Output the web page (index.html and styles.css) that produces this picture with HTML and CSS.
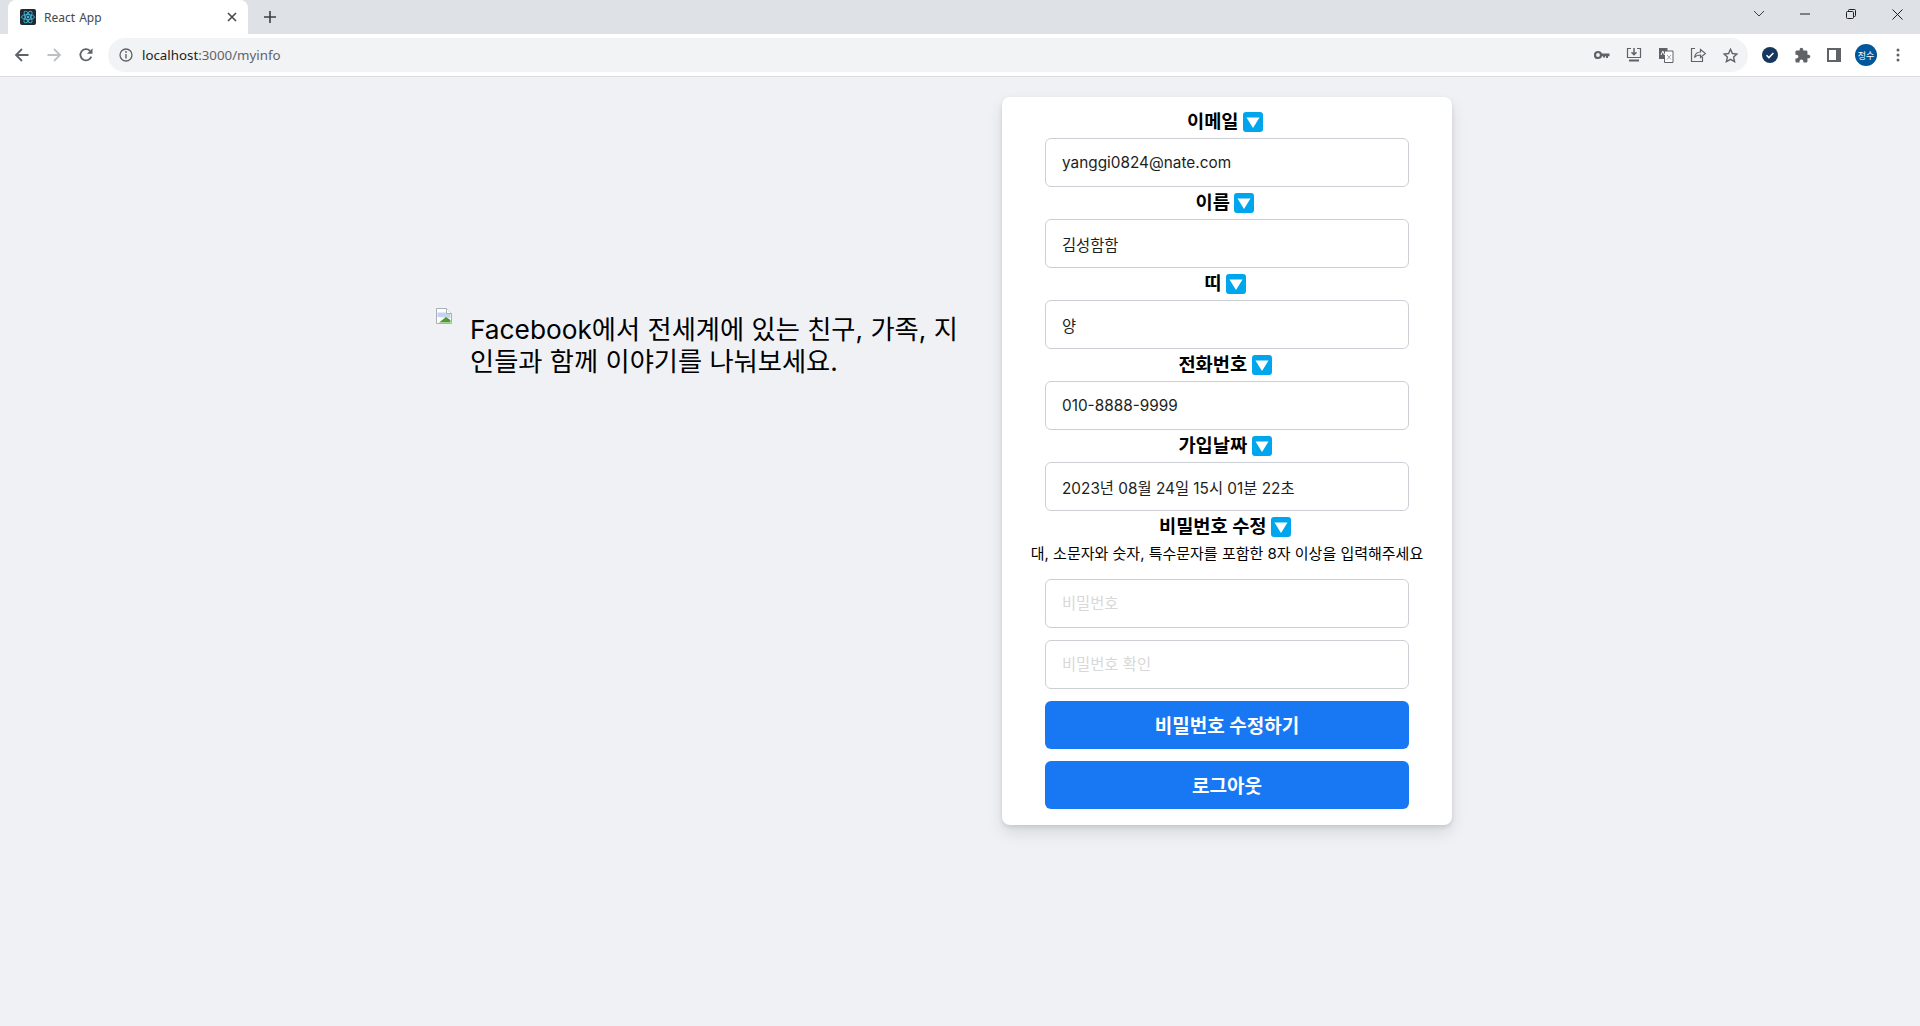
FILE: index.html
```html
<!DOCTYPE html>
<html lang="ko">
<head>
<meta charset="utf-8">
<title>React App</title>
<link rel="stylesheet" href="styles.css">
</head>
<body>
<header class="chrome">
  <div class="tabbar">
    <div class="tab">
      <svg class="favicon" width="16" height="16" viewBox="0 0 16 16"><rect width="16" height="16" rx="2" fill="#1f2a30"/><g fill="none" stroke="#3fb6d8" stroke-width="0.9"><ellipse cx="8" cy="8" rx="6.5" ry="2.5"/><ellipse cx="8" cy="8" rx="6.5" ry="2.5" transform="rotate(60 8 8)"/><ellipse cx="8" cy="8" rx="6.5" ry="2.5" transform="rotate(120 8 8)"/></g><circle cx="8" cy="8" r="1.3" fill="#3fb6d8"/></svg>
      <span class="tab-title">React App</span>
      <svg class="tab-close" width="10" height="10" viewBox="0 0 10 10"><path d="M1 1l8 8M9 1l-8 8" stroke="#45484c" stroke-width="1.6"/></svg>
    </div>
    <svg class="new-tab" width="12" height="12" viewBox="0 0 12 12"><path d="M6 0v12M0 6h12" stroke="#3c4043" stroke-width="1.6"/></svg>
    <div class="win-controls">
      <span class="win-btn"><svg width="12" height="8" viewBox="0 0 12 8"><path d="M1 1l5 5 5-5" fill="none" stroke="#3c4043" stroke-width="1"/></svg></span>
      <span class="win-btn"><svg width="10" height="2" viewBox="0 0 10 2"><path d="M0 1h10" stroke="#1f1f1f" stroke-width="1"/></svg></span>
      <span class="win-btn"><svg width="10" height="10" viewBox="0 0 10 10"><path d="M2.5 2.5V1.5a1 1 0 0 1 1-1h5a1 1 0 0 1 1 1v5a1 1 0 0 1-1 1h-1" fill="none" stroke="#1f1f1f"/><rect x="0.5" y="2.5" width="7" height="7" rx="1" fill="none" stroke="#1f1f1f"/></svg></span>
      <span class="win-btn"><svg width="11" height="11" viewBox="0 0 11 11"><path d="M.5.5l10 10M10.5.5l-10 10" stroke="#1f1f1f" stroke-width="1"/></svg></span>
    </div>
  </div>
  <div class="toolbar">
    <span class="tool"><svg width="16" height="16" viewBox="0 0 16 16"><path d="M14.5 8H2.5M8 2L2 8l6 6" fill="none" stroke="#5f6368" stroke-width="1.8"/></svg></span>
    <span class="tool"><svg width="16" height="16" viewBox="0 0 16 16"><path d="M1.5 8h12M8 2l6 6-6 6" fill="none" stroke="#bdc1c6" stroke-width="1.8"/></svg></span>
    <span class="tool"><svg width="16" height="16" viewBox="0 0 16 16"><path d="M13.3 9.6A5.6 5.6 0 1 1 12 3.9" fill="none" stroke="#5f6368" stroke-width="1.8"/><path d="M14.5 1.2v5.6H8.9z" fill="#5f6368"/></svg></span>
    <div class="omnibox">
      <svg class="info" width="14" height="14" viewBox="0 0 14 14"><circle cx="7" cy="7" r="6" fill="none" stroke="#5f6368" stroke-width="1.3"/><path d="M7 6v4.4" stroke="#5f6368" stroke-width="1.4"/><circle cx="7" cy="4" r="0.9" fill="#5f6368"/></svg>
      <span class="url"><span class="url-host">localhost</span>:3000/myinfo</span>
      <span class="omni-icons">
        <span class="tool"><svg width="16" height="16" viewBox="0 0 16 16"><circle cx="4" cy="8" r="3" fill="none" stroke="#5f6368" stroke-width="2.2"/><path d="M6.500 6.500H15.500V9.200H14V11h-2V9.200h-1V10.500H9V9.200H6.500z" fill="#5f6368"/></svg></span>
        <span class="tool"><svg width="16" height="16" viewBox="0 0 16 16"><path d="M5 1.500H1.500v9h13v-9H11" fill="none" stroke="#5f6368" stroke-width="1.2"/><path d="M8 1v6.500M5.500 5.300L8 7.800l2.500-2.500" fill="none" stroke="#5f6368" stroke-width="1.5"/><path d="M3 12.500h10v2H3z" fill="#5f6368"/></svg></span>
        <span class="tool"><svg width="16" height="16" viewBox="0 0 16 16"><rect x="1" y="1" width="8.500" height="11" fill="#5f6368"/><path d="M6.500 4H15v11.500H6.500z" fill="#fff" stroke="#5f6368"/><path d="M9 8l4 4.500M13 8l-4 4.500" stroke="#9aa0a6"/><path d="M3 8l1.800-4L6.500 8" fill="none" stroke="#fff"/></svg></span>
        <span class="tool"><svg width="16" height="16" viewBox="0 0 16 16"><path d="M5 1.500H1.500v13h11V10" fill="none" stroke="#5f6368" stroke-width="1.200"/><path d="M4.500 10.500C5 7 7.500 5 10.500 5V2.500l5 4-5 4V8C8 8 6 8.500 4.500 10.500z" fill="none" stroke="#5f6368" stroke-width="1.200"/></svg></span>
        <span class="tool"><svg width="15" height="15" viewBox="0 0 15 15"><path d="M7.500 1.300l1.900 4.200 4.600.5-3.400 3.100 1 4.500-4.100-2.300-4.100 2.300 1-4.500L1 6l4.600-.5z" fill="none" stroke="#5f6368" stroke-width="1.400"/></svg></span>
      </span>
    </div>
    <span class="tool tool-first"><svg width="16" height="16" viewBox="0 0 16 16"><circle cx="8" cy="8" r="8" fill="#17375e"/><path d="M4.500 8.300l2.400 2.300 4.500-4.700" fill="none" stroke="#fff" stroke-width="1.500"/></svg></span>
    <span class="tool"><svg width="17" height="17" viewBox="0 0 24 24"><path d="M20.500 11H19V7c0-1.100-.9-2-2-2h-4V3.500C13 2.120 11.880 1 10.500 1S8 2.120 8 3.500V5H4c-1.100 0-1.990.9-1.990 2v3.800H3.500c1.490 0 2.700 1.210 2.700 2.700s-1.210 2.700-2.700 2.700H2V20c0 1.100.9 2 2 2h3.800v-1.500c0-1.490 1.210-2.700 2.700-2.700 1.490 0 2.700 1.210 2.700 2.700V22H17c1.100 0 2-.9 2-2v-4h1.500c1.380 0 2.500-1.120 2.500-2.500S21.880 11 20.500 11z" fill="#5f6368"/></svg></span>
    <span class="tool"><svg width="14" height="14" viewBox="0 0 14 14"><rect x="1" y="1" width="12" height="12" fill="#fff" stroke="#5f6368" stroke-width="2"/><rect x="9" y="1" width="4" height="12" fill="#5f6368"/></svg></span>
    <span class="tool"><span class="avatar">정수</span></span>
    <span class="tool"><svg width="4" height="14" viewBox="0 0 4 14"><circle cx="2" cy="2" r="1.500" fill="#5f6368"/><circle cx="2" cy="7" r="1.500" fill="#5f6368"/><circle cx="2" cy="12" r="1.500" fill="#5f6368"/></svg></span>
  </div>
</header>

<main class="page">
  <section class="intro">
    <svg class="broken" width="16" height="16" viewBox="0 0 16 16"><path d="M.5.500h10l5 5v10H.500z" fill="#fff" stroke="#a9b0b8"/><path d="M1.500 4.500h8.500l4.500 1.500v4L1.500 9z" fill="#c5d3ee"/><path d="M3 14.500L10 9l4.500 3v2.500z" fill="#4f9a35"/><path d="M10.500.500v5h5" fill="#fff" stroke="#a9b0b8"/></svg>
    <h2 class="tagline">Facebook에서 전세계에 있는 친구, 가족, 지인들과 함께 이야기를 나눠보세요.</h2>
  </section>

  <form class="card">
    <label class="field-label">이메일 <svg class="down" viewBox="0 0 20 20"><rect width="20" height="20" rx="3" fill="#00a6ed"/><path d="M3.500 5.500h13L10 16z" fill="#fff"/></svg></label>
    <input class="field" value="yanggi0824@nate.com">
    <label class="field-label">이름 <svg class="down" viewBox="0 0 20 20"><rect width="20" height="20" rx="3" fill="#00a6ed"/><path d="M3.500 5.500h13L10 16z" fill="#fff"/></svg></label>
    <input class="field" value="김성함함">
    <label class="field-label">띠 <svg class="down" viewBox="0 0 20 20"><rect width="20" height="20" rx="3" fill="#00a6ed"/><path d="M3.500 5.500h13L10 16z" fill="#fff"/></svg></label>
    <input class="field" value="양">
    <label class="field-label">전화번호 <svg class="down" viewBox="0 0 20 20"><rect width="20" height="20" rx="3" fill="#00a6ed"/><path d="M3.500 5.500h13L10 16z" fill="#fff"/></svg></label>
    <input class="field" value="010-8888-9999">
    <label class="field-label">가입날짜 <svg class="down" viewBox="0 0 20 20"><rect width="20" height="20" rx="3" fill="#00a6ed"/><path d="M3.500 5.500h13L10 16z" fill="#fff"/></svg></label>
    <input class="field" value="2023년 08월 24일 15시 01분 22초">
    <label class="field-label">비밀번호 수정 <svg class="down" viewBox="0 0 20 20"><rect width="20" height="20" rx="3" fill="#00a6ed"/><path d="M3.500 5.500h13L10 16z" fill="#fff"/></svg></label>
    <p class="hint">대, 소문자와 숫자, 특수문자를 포함한 8자 이상을 입력해주세요</p>
    <input class="field field-stack" placeholder="비밀번호">
    <input class="field field-stack" placeholder="비밀번호 확인">
    <button class="btn" type="button">비밀번호 수정하기</button>
    <button class="btn" type="button">로그아웃</button>
  </form>
</main>
</body>
</html>
```
FILE: styles.css
```css
* { box-sizing: border-box; }
html, body { margin: 0; height: 100%; }
body {
  background: #eff1f5;
  font-family: Inter, "Noto Sans CJK KR", "Noto Sans", sans-serif;
  color: #000;
  overflow: hidden;
}

/* browser chrome */
.chrome { height: 77px; font-family: "Noto Sans", "Noto Sans CJK KR", sans-serif; }
.tabbar { height: 34px; background: #dee1e6; display: flex; align-items: center; padding-left: 8px; }
.tab {
  width: 240px; height: 34px; background: #fff; border-radius: 8px 8px 0 0;
  display: flex; align-items: center; padding: 0 11px 0 12px;
}
.favicon { flex: none; }
.tab-title { margin-left: 8px; font-size: 12px; color: #45484c; flex: 1; word-spacing: 1px; }
.tab-close { flex: none; }
.new-tab { margin-left: 16px; }
.win-controls { margin-left: auto; display: flex; height: 28px; align-self: flex-start; }
.win-btn { width: 46px; height: 28px; display: flex; align-items: center; justify-content: center; }
.toolbar {
  height: 43px; background: #fff; border-bottom: 1px solid #dadce0;
  display: flex; align-items: center; padding-left: 6px; padding-right: 6px;
}
.tool { width: 32px; height: 32px; flex: none; display: flex; align-items: center; justify-content: center; }
.omnibox {
  flex: 1; height: 34px; margin-left: 6px; background: #f1f3f4; border-radius: 17px;
  display: flex; align-items: center; padding-left: 11px; padding-right: 2px;
}
.info { flex: none; }
.url { margin-left: 9px; font-size: 13.300px; color: #5f6368; }
.url-host { color: #202124; }
.omni-icons { margin-left: auto; display: flex; }
.tool-first { margin-left: 6px; }
.avatar {
  width: 22px; height: 22px; border-radius: 50%; background: #00569b; color: #fff;
  font-size: 9px; display: flex; align-items: center; justify-content: center;
}

/* page */
.page { display: flex; align-items: flex-start; padding: 20px 0 0 436px; }
.intro { width: 566px; display: flex; align-items: flex-start; padding-top: 211px; }
.broken { flex: none; margin-right: 18px; }
.tagline {
  margin: 0; padding-top: 6px; width: 492px;
  font-size: 26.250px; line-height: 32px; font-weight: 400;
}
.card {
  width: 450px; height: 728px; background: #fff; border-radius: 8px;
  box-shadow: 0 2px 4px rgba(0,0,0,.1), 0 8px 16px rgba(0,0,0,.1);
  padding-top: 9px;
  display: flex; flex-direction: column; align-items: center;
}
.field-label {
  height: 32px; padding-right: 4px; font-size: 18.700px; line-height: 20px; font-weight: 700;
  display: flex; align-items: center; white-space: pre; flex: none;
}
.down { width: 20px; height: 20px; flex: none; }
.field {
  width: 364px; height: 49px; flex: none; display: block;
  border: 1px solid #ccd0d5; border-radius: 6px; background: #fff;
  padding: 0 16px; font: 400 15.350px Inter, "Noto Sans CJK KR", sans-serif; color: #1c1e21; outline: none;
}
.field::placeholder { color: #d8d8d8; }
.field-stack { margin-bottom: 12px; }
.hint { margin: -1px 0 13px; font-size: 15px; line-height: 24px; white-space: nowrap; }
.btn {
  width: 364px; height: 48px; flex: none; border: 0; border-radius: 6px; background: #1877f2;
  color: #fff; font: 700 19px Inter, "Noto Sans CJK KR", sans-serif; margin-bottom: 12px; padding-bottom: 2px;
}
.btn:last-child { margin-bottom: 0; }
```
